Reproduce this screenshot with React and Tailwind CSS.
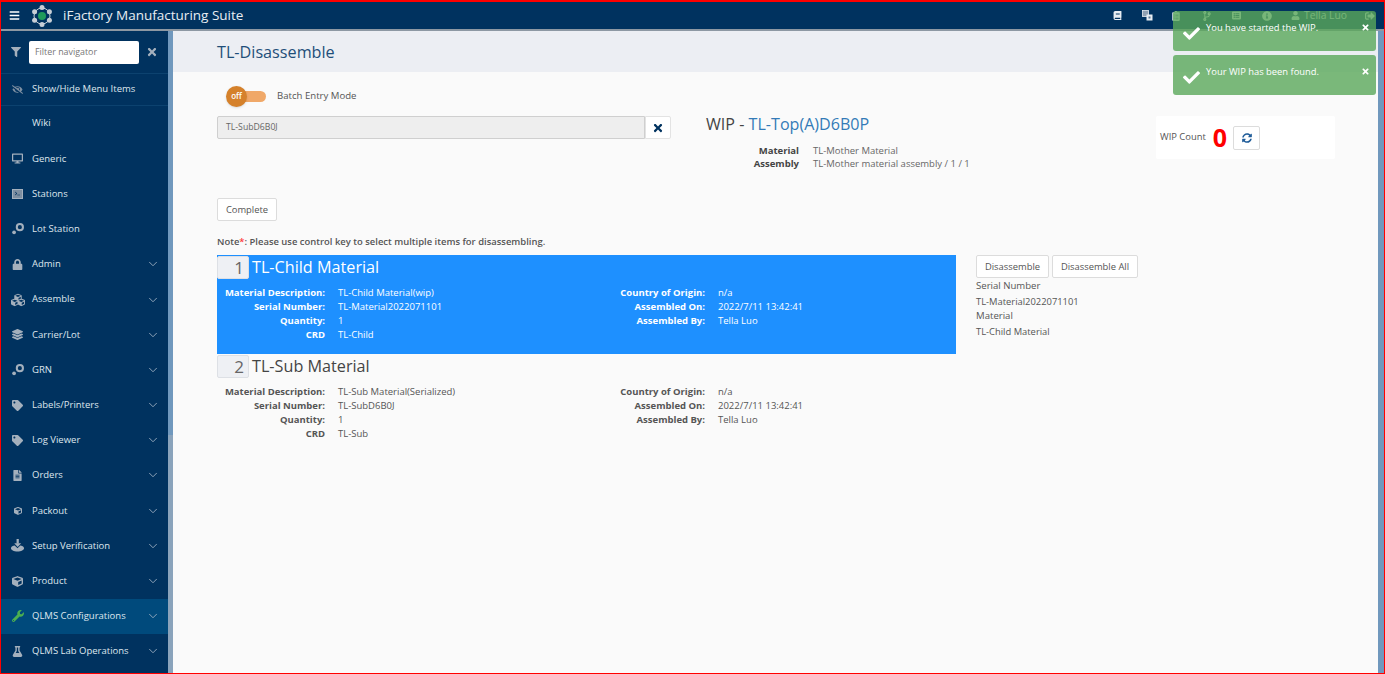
import React from "react";
import {
  FaBars, FaFilter, FaTimes, FaEyeSlash, FaDesktop, FaTerminal, FaLock, FaCubes, FaLayerGroup, FaTag,
  FaFileAlt, FaCube, FaWrench, FaFlask, FaCheck, FaBook, FaUser, FaInfoCircle, FaSignOutAlt,
  FaCodeBranch, FaClipboardList, FaListAlt, FaSyncAlt,
} from "react-icons/fa";
import { ChevronDown } from "lucide-react";

const Cog = () => (
  <svg width="14" height="14" viewBox="0 0 15 15" fill="#a4b0bd">
    <circle cx="9.500" cy="5.500" r="3.300" fill="none" stroke="#a4b0bd" strokeWidth="2.200" />
    <circle cx="3.300" cy="11" r="2" />
  </svg>
);
const Setup = () => (
  <svg width="15" height="14" viewBox="0 0 16 15" fill="#a4b0bd">
    <rect x="7" y="0" width="2.400" height="5" />
    <path d="M4.500 4.500h7.400L8.200 8.500z" />
    <path d="M1 10c0-2 2.500-3 4-3l3 3 3-3c1.500 0 4 1 4 3s-3 3.500-7 3.500S1 12 1 10z" />
  </svg>
);
const Terminal = () => (
  <span className="w-[11px] h-[10px] bg-[#7d8fa2] border border-[#a4b0bd] flex items-center justify-center">
    <FaTerminal size={5} color="#00325f" />
  </span>
);
const Translate = () => (
  <svg width="11" height="11" viewBox="0 0 11 11" className="ml-[20px]">
    <rect x="0.500" y="0.500" width="6" height="6" fill="#8fa0b2" stroke="#e8edf2" strokeWidth="0.800" />
    <rect x="4.500" y="4.500" width="6" height="6" fill="#e8edf2" />
    <rect x="6.500" y="6.500" width="2" height="2" fill="#5b7894" />
  </svg>
);
const Logo = () => (
  <svg width="22" height="22" viewBox="0 0 22 22">
    <circle cx="11" cy="11" r="8" fill="none" stroke="#c9d2da" strokeWidth="1" />
    <circle cx="11" cy="11" r="4" fill="#1f9a5b" />
    {[[11, 2.500], [18.400, 6.800], [18.400, 15.200], [11, 19.500], [3.600, 15.200], [3.600, 6.800]].map(([x, y], i) => (
      <circle key={i} cx={x} cy={y} r="2.500" fill="#c7ced6" />
    ))}
  </svg>
);

const items = [
  ["Wiki", null, false],
  ["Generic", <FaDesktop size={11} />, false],
  ["Stations", <Terminal />, false],
  ["Lot Station", <Cog />, false],
  ["Admin", <FaLock size={11} />, true],
  ["Assemble", <FaCubes size={14} />, true],
  ["Carrier/Lot", <FaLayerGroup size={11} />, true],
  ["GRN", <Cog />, true],
  ["Labels/Printers", <FaTag size={11} />, true],
  ["Log Viewer", <FaTag size={11} />, true],
  ["Orders", <FaFileAlt size={11} />, true],
  ["Packout", <FaCube size={8} />, true],
  ["Setup Verification", <Setup />, true],
  ["Product", <FaCube size={11} />, true],
  ["QLMS Configurations", <FaWrench size={12} color="#4caf50" />, true, true],
  ["QLMS Lab Operations", <FaFlask size={11} />, true],
];

function NavRow({ label, icon, chevron, active }) {
  return (
    <div className={`h-[35.2px] flex items-center pl-[9px] pr-[8px] ${active ? "bg-[#004a7c]" : ""}`}>
      <span className="w-[15px] flex justify-center text-[#a4b0bd] shrink-0">{icon}</span>
      <span className="ml-[7px] flex-1 text-[9.5px] font-medium whitespace-nowrap text-[#dfe6ed]">{label}</span>
      {chevron && <ChevronDown size={14} strokeWidth={1.5} className="text-[#9fb0c2]" />}
    </div>
  );
}

function Sidebar() {
  return (
    <aside className="w-[167px] shrink-0 bg-[#00325f] flex flex-col">
      <div className="h-[43px] flex items-center border-b border-[#0c426f] pl-[10px]">
        <FaFilter size={10} className="text-[#a4b0bd]" />
        <div className="ml-[8px] w-[110px] h-[23px] bg-white rounded-[2px] flex items-center pl-[6px] text-[8.9px] text-[#777]">Filter navigator</div>
        <FaTimes size={12} className="ml-[7px] text-[#a4b0bd]" />
      </div>
      <div className="h-[32px] flex items-center border-b border-[#0c426f] pl-[9px]">
        <span className="w-[15px] flex justify-center text-[#7d8fa2]"><FaEyeSlash size={11} /></span>
        <span className="ml-[7px] text-[9.5px] font-medium text-[#dfe6ed]">Show/Hide Menu Items</span>
      </div>
      {items.map(([l, i, c, a]) => <NavRow key={l} label={l} icon={i} chevron={c} active={a} />)}
    </aside>
  );
}

function Header() {
  return (
    <header className="h-[29px] shrink-0 bg-[#00325f] border-b-2 border-[#8d98a3] flex items-center text-white">
      <FaBars size={11} className="ml-[8px]" />
      <span className="ml-[11px]"><Logo /></span>
      <span className="ml-[10px] text-[13.5px] leading-none text-[#e8edf2]">iFactory Manufacturing Suite</span>
      <div className="ml-auto flex items-center text-[#e8edf2] pr-[9px]">
        <FaBook size={9} />
        <Translate />
        <FaClipboardList size={10} className="ml-[18px]" />
        <FaCodeBranch size={10} className="ml-[21px]" />
        <FaListAlt size={9} className="ml-[20px]" />
        <FaInfoCircle size={10} className="ml-[21px]" />
        <FaUser size={9} className="ml-[19px]" />
        <span className="ml-[4px] text-[10.3px]">Tella Luo</span>
        <FaSignOutAlt size={10} className="ml-[18px]" />
      </div>
    </header>
  );
}

function Pair({ label, value, w }) {
  return (
    <div className="flex h-[13.8px] items-center">
      <span className={`${w} text-right font-bold text-[9.5px] shrink-0`}>{label}</span>
      <span className="ml-[13px] text-[9.5px]">{value}</span>
    </div>
  );
}

function Block({ n, title, selected, rows1, rows2 }) {
  return (
    <div className={`w-[739px] h-[99px] ${selected ? "bg-[#1e90ff] text-white" : "text-[#555]"}`}>
      <div className="flex h-[25px]">
        <span className="w-[32px] h-[23px] mt-[1px] bg-[#eef0f4] border border-[#dde0e5] rounded-[2px] text-[#666] text-[17px] leading-[22px] text-right pr-[4px]">{n}</span>
        <span className={`ml-[3px] text-[16.2px] leading-[24px] ${selected ? "text-white" : "text-[#444]"}`}>{title}</span>
      </div>
      <div className="flex mt-[6.5px]">
        <div className="w-[403px] ml-[-5px]">
          {rows1.map(([l, v]) => <Pair key={l} label={l} value={v} w="w-[113px]" />)}
        </div>
        <div>
          {rows2.map(([l, v]) => <Pair key={l} label={l} value={v} w="w-[90px]" />)}
        </div>
      </div>
    </div>
  );
}

function Toast({ text }) {
  return (
    <div className="h-[40px] w-[203px] rounded-[3px] bg-[#5aa75a]/80 flex text-white text-[9.4px] relative">
      <FaCheck size={17} className="absolute left-[10px] top-[14px]" />
      <span className="absolute left-[33px] top-[10px] leading-[14px]">{text}</span>
      <FaTimes size={9} className="absolute right-[6px] top-[12px]" />
    </div>
  );
}

export default function App() {
  return (
    <div className="w-[1385px] h-[674px] relative overflow-hidden border-t-2 border-l border-r border-b border-[#ff0000] flex flex-col bg-[#fafafa] text-[#555]" style={{ fontFamily: '"Open Sans", sans-serif' }}>
      <Header />
      <div className="flex flex-1 min-h-0">
        <Sidebar />
        <div className="w-[5px] shrink-0 flex flex-col">
          <div className="h-[404px] bg-[#7098bd]" />
          <div className="flex-1 bg-[#8aa3bb]" />
        </div>
        <main className="flex-1 min-w-0 flex flex-col">
          <div className="h-[41px] bg-[#eceef3] flex items-center pl-[44px] pt-[2px] text-[16.2px] text-[#1f4e79]">TL-Disassemble</div>
          <div className="pl-[44px] flex-1 relative">
            <div className="flex">
              <div className="w-[454px]">
                <div className="flex items-center h-[22px] mt-[13px] ml-[9px]">
                  <div className="relative w-[40px] h-[22px] flex items-center">
                    <span className="absolute left-[4px] right-0 h-[11px] bg-[#f0a868] rounded-full" />
                    <span className="absolute left-0 w-[21px] h-[21px] rounded-full bg-[#d5812b] shadow text-white text-[8px] font-semibold flex items-center justify-center">off</span>
                  </div>
                  <span className="ml-[11px] text-[9.6px] font-medium text-[#555]">Batch Entry Mode</span>
                </div>
                <div className="flex h-[23px] mt-[9px]">
                  <div className="flex-1 bg-[#eeeeee] border border-[#cfcfcf] rounded-l-[2px] flex items-center pl-[8px] text-[8.7px] text-[#666]">TL-SubD6B0J</div>
                  <div className="w-[26px] bg-white border border-[#e3e3e3] rounded-r-[2px] flex items-center justify-center">
                    <FaTimes size={12} color="#00325f" />
                  </div>
                </div>
              </div>
              <div className="ml-[35px] w-[450px] pt-[41px]">
                <div className="text-[16.1px] leading-[22px] text-[#444]">WIP - <span className="text-[#337ab7]">TL-Top(A)D6B0P</span></div>
                <div className="mt-[9px] mb-[1px] text-[9.5px] text-[#666]">
                  <div className="flex h-[13.6px] items-center"><span className="w-[93px] text-right font-bold text-[#444]">Material</span><span className="ml-[14px]">TL-Mother Material</span></div>
                  <div className="flex h-[13.6px] items-center"><span className="w-[93px] text-right font-bold text-[#444]">Assembly</span><span className="ml-[14px]">TL-Mother material assembly / 1 / 1</span></div>
                </div>
              </div>
              <div className="w-[179px] h-[43px] mt-[44px] bg-white rounded-[2px] flex items-center pl-[4px]">
                <span className="text-[9.4px] text-[#555]">WIP Count</span>
                <span className="ml-[7px] text-[25px] font-bold text-[#ff0000] leading-none">0</span>
                <span className="ml-[6px] w-[27px] h-[24px] border border-[#dcdcdc] rounded-[2px] bg-white flex items-center justify-center"><FaSyncAlt size={10} color="#1f5c99" /></span>
              </div>
            </div>
            <div className="mt-[26px] w-[60px] h-[23px] border border-[#dcdcdc] bg-white rounded-[2px] flex items-center justify-center text-[9.4px] text-[#555]">Complete</div>
            <div className="mt-[14px] text-[9.45px] leading-[13px] font-semibold text-[#555]">Note<span className="text-[#ff3b3b]">*</span>: Please use control key to select multiple items for disassembling.</div>
            <div className="flex mt-[7px]">
              <div>
                <Block n="1" title="TL-Child Material" selected
                  rows1={[["Material Description:", "TL-Child Material(wip)"], ["Serial Number:", "TL-Material2022071101"], ["Quantity:", "1"], ["CRD", "TL-Child"]]}
                  rows2={[["Country of Origin:", "n/a"], ["Assembled On:", "2022/7/11 13:42:41"], ["Assembled By:", "Tella Luo"]]} />
                <Block n="2" title="TL-Sub Material"
                  rows1={[["Material Description:", "TL-Sub Material(Serialized)"], ["Serial Number:", "TL-SubD6B0J"], ["Quantity:", "1"], ["CRD", "TL-Sub"]]}
                  rows2={[["Country of Origin:", "n/a"], ["Assembled On:", "2022/7/11 13:42:41"], ["Assembled By:", "Tella Luo"]]} />
              </div>
              <div className="ml-[20px] text-[9.4px] text-[#555]">
                <div className="flex gap-[3px]">
                  <span className="h-[23px] w-[73px] border border-[#dcdcdc] bg-white rounded-[2px] flex items-center justify-center">Disassemble</span>
                  <span className="h-[23px] w-[86px] border border-[#dcdcdc] bg-white rounded-[2px] flex items-center justify-center">Disassemble All</span>
                </div>
                <div className="mt-[1px] leading-[14px] text-[9.6px] font-medium">Serial Number</div>
                <div className="mt-[2px] leading-[14px]">TL-Material2022071101</div>
                <div className="leading-[14px] text-[9.6px] font-medium">Material</div>
                <div className="mt-[2px] leading-[14px]">TL-Child Material</div>
              </div>
            </div>
          </div>
        </main>
        <div className="w-[6px] bg-[#7098bd] shrink-0" />
      </div>
      <div className="absolute top-[9px] left-[1172px] flex flex-col gap-[4px]">
        <Toast text="You have started the WIP." />
        <Toast text="Your WIP has been found." />
      </div>
    </div>
  );
}
